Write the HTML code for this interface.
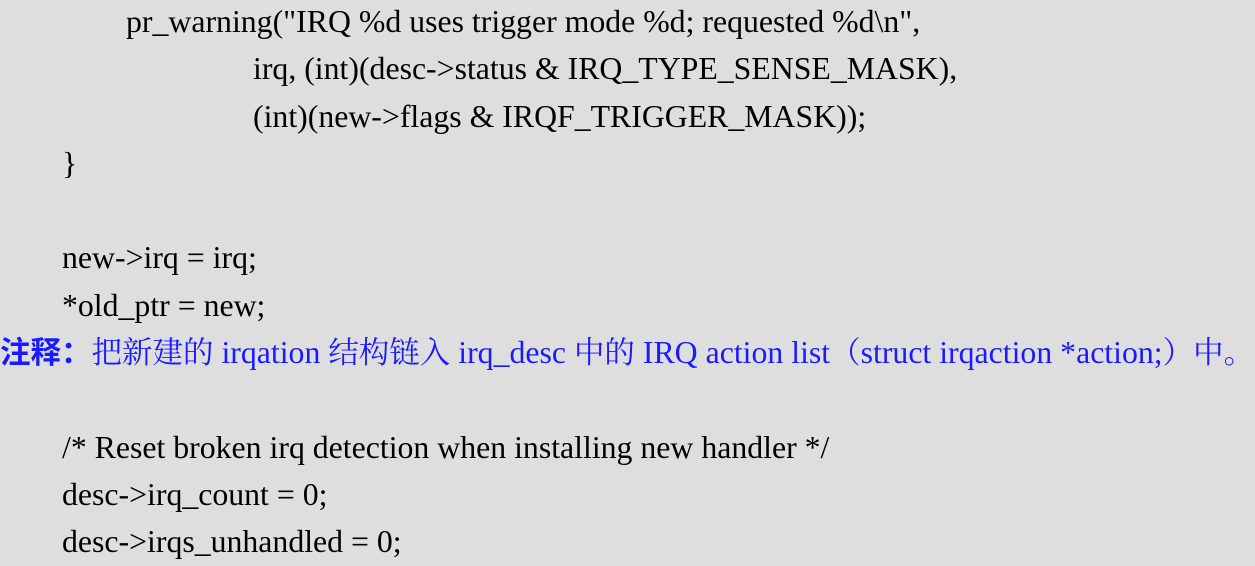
<!DOCTYPE html>
<html><head><meta charset="utf-8"><style>
html,body{margin:0;padding:0;background:#dedede;width:1255px;height:564px;overflow:hidden}
body{font-family:"Liberation Serif","Noto Serif CJK SC",serif;font-size:31.8px;color:#000}
.w{position:absolute;top:-2px;left:0}
.l{height:47.3px;line-height:47.3px;white-space:pre}
.b{color:#1a1aff;font-size:30.5px}
.b b{font-family:"Liberation Serif","Noto Sans CJK SC",serif}
.c{font-family:"Liberation Serif","Noto Serif CJK SC",serif}
.e{font-size:31.8px}
</style></head><body><div class="w">
<div class="l" style="padding-left:126px">pr_warning("IRQ %d uses trigger mode %d; requested %d\n",</div>
<div class="l" style="padding-left:253px">irq, (int)(desc-&gt;status &amp; IRQ_TYPE_SENSE_MASK),</div>
<div class="l" style="padding-left:253px">(int)(new-&gt;flags &amp; IRQF_TRIGGER_MASK));</div>
<div class="l" style="padding-left:62px">}</div>
<div class="l"> </div>
<div class="l" style="padding-left:62px">new-&gt;irq = irq;</div>
<div class="l" style="padding-left:62px">*old_ptr = new;</div>
<div class="l b"><b>注释：</b><span class="c">把新建的</span><span class="e"> irqation </span><span class="c">结构链入</span><span class="e"> irq_desc </span><span class="c">中的</span><span class="e"> IRQ action list</span><span class="c">（</span><span class="e">struct irqaction *action;</span><span class="c">）中。</span></div>
<div class="l"> </div>
<div class="l" style="padding-left:62px">/* Reset broken irq detection when installing new handler */</div>
<div class="l" style="padding-left:62px">desc-&gt;irq_count = 0;</div>
<div class="l" style="padding-left:62px">desc-&gt;irqs_unhandled = 0;</div>
</div></body></html>
